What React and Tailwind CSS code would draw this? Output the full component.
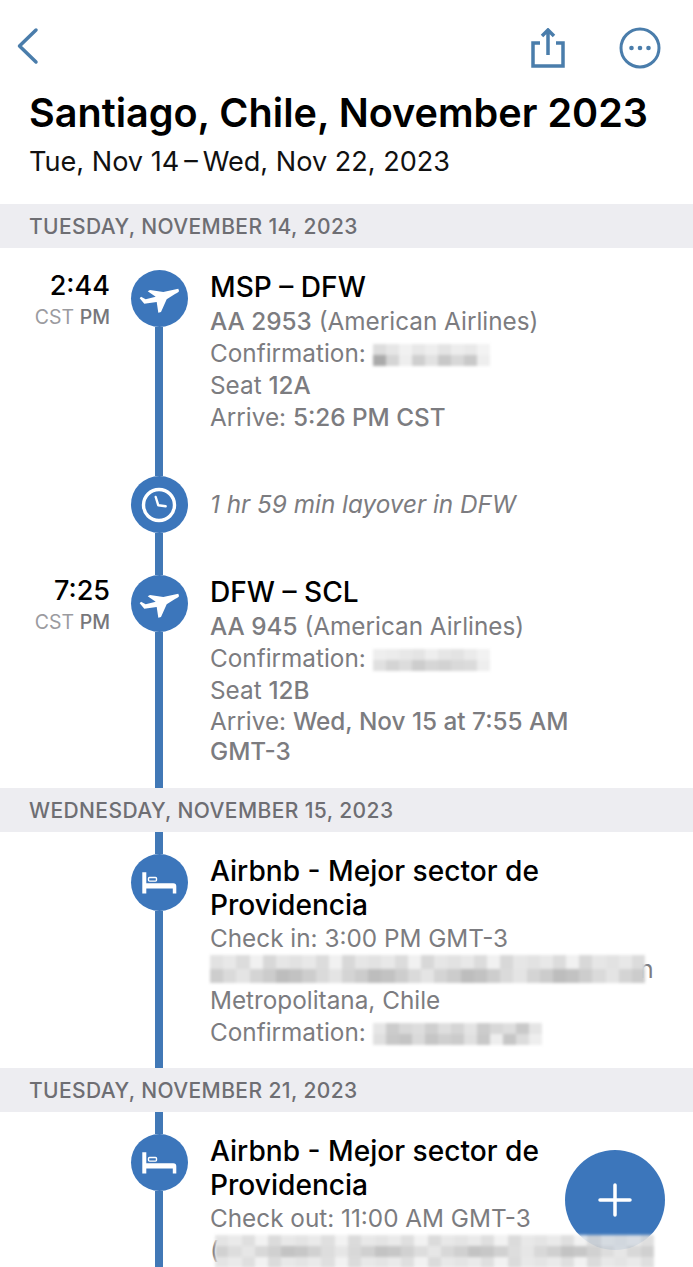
const Plane = () => (
    <svg viewBox="0 0 40 40" className="w-10 h-10 fill-white">
        <path d="M39.3 9.7 24.3 13 11 11l-2.3 1.3 8 5.4-10 2.6L2 17.7l-1.3 1.6 4.6 5.4L17.7 23l1.6 10.7 2.7-.7 5.7-12.7 8.3-5.3c2-1 4-2.2 4-3-.3-1.4-.7-2.2-.7-2.3z" />
    </svg>
);

const Bed = () => (
    <svg viewBox="0 0 40 40" className="w-10 h-10">
        <path fill="white" d="M3.3 9.3h4v11h27a3 3 0 0 1 3 3v7.3h-3.5v-5H7.3v5h-4z" />
        <rect x="9.5" y="14.5" width="8" height="3.6" rx="1" fill="none" stroke="white" strokeWidth="1.4" />
    </svg>
);

const ClockIcon = () => (
    <svg viewBox="0 0 40 40" className="w-10 h-10" fill="none" stroke="white" strokeLinecap="round" strokeLinejoin="round">
        <circle cx="20" cy="20" r="15.5" strokeWidth="3.4" />
        <path d="M16.7 12l2.6 8.3 7.4 1" strokeWidth="2.4" />
    </svg>
);

const Blur = ({ cells, cell = 13, cellHeight = 11, rows = 2, className = '' }) => (
    <div className={`inline-grid align-middle blur-[1.5px] ${className}`} style={{ gridTemplateColumns: `repeat(${Math.ceil(cells.length / rows)}, ${cell}px)` }}>
        {cells.map((c, i) => (
            <div key={i} style={{ backgroundColor: c, height: cellHeight }} />
        ))}
    </div>
);

const short1 = ['#ddd', '#e6e6e6', '#f1f1f1', '#e8e8e8', '#eee', '#e4e4e4', '#ededed', '#e9e9e9', '#f3f3f3',
    '#aaa', '#d5d5d5', '#eee', '#cfcfcf', '#e2e2e2', '#c8c8c8', '#d8d8d8', '#c9c9c9', '#eee'];
const short2 = ['#eee', '#ececec', '#e8e8e8', '#e4e4e4', '#eee', '#e6e6e6', '#e3e3e3', '#ebebeb', '#f2f2f2',
    '#e0e0e0', '#d4d4d4', '#dcdcdc', '#cdcdcd', '#d6d6d6', '#d2d2d2', '#d9d9d9', '#dbdbdb', '#eee'];
const conf = ['#e6e6e6', '#ccc', '#d8d8d8', '#ddd', '#cfcfcf', '#dedede', '#d5d5d5', '#e4e4e4', '#ccc', '#d8d8d8', '#dedede', '#c9c9c9', '#e5e5e5',
    '#e0e0e0', '#c8c8c8', '#c4c4c4', '#dadada', '#c6c6c6', '#cfcfcf', '#cbcbcb', '#e0e0e0', '#c8c8c8', '#eee', '#c6c6c6', '#dcdcdc', '#eee'];
const addrTop = [];
const addrBottom = [];
for (let i = 0; i < 33; i++) addrTop.push(['#e2e2e2', '#e8e8e8', '#dcdcdc', '#f1f1f1', '#d8d8d8', '#e6e6e6'][i * 7 % 6]);
for (let i = 0; i < 33; i++) addrBottom.push(['#cdcdcd', '#d4d4d4', '#c2c2c2', '#e4e4e4', '#bdbdbd', '#dadada', '#cccccc'][i * 5 % 7]);
const addr = [...addrTop, ...addrBottom];
const addrTall = [...addrTop, ...addrBottom, ...addrTop];

function DayHeader({ children }) {
    return (
        <div className="h-[44px] bg-[#ededf1] flex items-center pl-[29px] pt-[1px] text-[21px] font-medium text-[#6e6e73] tracking-[0.4px]">
            {children}
        </div>
    );
}

function Row({ time, icon, height, topGap = 22, first = false, children }) {
    return (
        <div className="flex" style={{ height }}>
            <div className="w-[110px] text-right" style={{ marginTop: topGap - 2 }}>
                {time && (
                    <>
                        <div className="text-[27px] leading-[36px] font-medium text-black">{time}</div>
                        <div className="mt-[1px] text-[19.5px] leading-[24px] text-[#9b9b9f]">
                            CST <span className="font-medium text-[#77777b]">PM</span>
                        </div>
                    </>
                )}
            </div>
            <div className="w-[100px] pr-[2px] flex flex-col items-center">
                {topGap > 0 && <div className={`w-[8px] shrink-0 ${first ? '' : 'bg-[#4178b6]'}`} style={{ height: topGap }} />}
                <div className="w-[57px] h-[57px] rounded-full bg-[#3c76bb] flex items-center justify-center shrink-0">
                    {icon}
                </div>
                <div className="w-[8px] flex-1 bg-[#4178b6]" />
            </div>
            <div className="flex-1 max-w-[420px] text-[24.3px] leading-[32px] text-[#7c7c80]" style={{ paddingTop: topGap }}>
                {children}
            </div>
        </div>
    );
}

const Title = ({ children }) => <div className="text-[28.1px] leading-[34px] font-medium text-black">{children}</div>;

export default function App() {
    return (
        <div className="relative h-[1267px] overflow-hidden bg-white" style={{ fontFamily: 'Inter, "Noto Sans", sans-serif' }}>
            <div className="h-[204px]">
                <div className="h-[91px] flex items-start justify-between pl-[16px] pr-[32px] pt-[27px]">
                    <svg width="24" height="38" viewBox="0 0 24 38" fill="none" stroke="#4a7dab" strokeWidth="3.5" strokeLinecap="round" strokeLinejoin="round">
                        <path d="M20 3 3.5 19 20 35" />
                    </svg>
                    <div className="flex items-center gap-[54px]">
                        <svg width="34" height="40" viewBox="0 0 34 40" fill="none" stroke="#4a7dab" strokeWidth="3.5">
                            <path d="M9 15H2v23h30V15h-7M17 27V3M11 8l6-6 6 6" />
                        </svg>
                        <svg width="42" height="42" viewBox="0 0 42 42" fill="none" stroke="#4a7dab" strokeWidth="3">
                            <circle cx="21" cy="21" r="19" />
                            <circle cx="12.5" cy="21" r="2.3" fill="#4a7dab" stroke="none" />
                            <circle cx="21" cy="21" r="2.3" fill="#4a7dab" stroke="none" />
                            <circle cx="29.5" cy="21" r="2.3" fill="#4a7dab" stroke="none" />
                        </svg>
                    </div>
                </div>
                <h1 className="pl-[29px] text-[39.6px] leading-[44px] font-semibold text-black whitespace-nowrap">Santiago, Chile, November 2023</h1>
                <p className="pl-[29px] mt-[9px] text-[27.1px] leading-[36px] text-[#111]">Tue, Nov 14{'\u2009'}–{'\u2009'}Wed, Nov 22, 2023</p>
            </div>

            <DayHeader>TUESDAY, NOVEMBER 14, 2023</DayHeader>
            <Row time="2:44" height={228} first icon={<Plane />}>
                <Title>MSP – DFW</Title>
                <div className="pt-[1px]"><span className="font-medium">AA 2953</span> (American Airlines)</div>
                <div>Confirmation: <Blur cells={short1} /></div>
                <div>Seat <span className="font-medium">12A</span></div>
                <div>Arrive: <span className="font-medium">5:26 PM CST</span></div>
            </Row>
            <Row height={99} topGap={0} icon={<ClockIcon />}>
                <div className="pt-[12px] italic">1 hr 59 min layover in DFW</div>
            </Row>
            <Row time="7:25" height={213} topGap={0} icon={<Plane />}>
                <Title>DFW – SCL</Title>
                <div className="pt-[1px]"><span className="font-medium">AA 945</span> (American Airlines)</div>
                <div>Confirmation: <Blur cells={short2} /></div>
                <div>Seat <span className="font-medium">12B</span></div>
                <div className="leading-[31px]">Arrive: <span className="font-medium">Wed, Nov 15 at 7:55 AM</span></div>
                <div className="leading-[29px] font-medium">GMT-3</div>
            </Row>

            <DayHeader>WEDNESDAY, NOVEMBER 15, 2023</DayHeader>
            <Row height={236} icon={<Bed />}>
                <Title>Airbnb - Mejor sector de Providencia</Title>
                <div>Check in: 3:00 PM GMT-3</div>
                <div className="h-[30px] flex items-center whitespace-nowrap">
                    <Blur cells={addr} cell={13.2} cellHeight={14} className="relative z-10" />
                    <span className="-ml-[6px]">n</span>
                </div>
                <div>Metropolitana, Chile</div>
                <div>Confirmation: <Blur cells={conf} /></div>
            </Row>

            <DayHeader>TUESDAY, NOVEMBER 21, 2023</DayHeader>
            <Row height={160} icon={<Bed />}>
                <Title>Airbnb - Mejor sector de Providencia</Title>
                <div>Check out: 11:00 AM GMT-3</div>
                <div className="h-[32px]">(</div>
            </Row>

            <div className="absolute left-[565px] top-[1150px] w-[100px] h-[100px] rounded-full bg-[#3c76bb] flex items-center justify-center">
                <svg width="34" height="34" viewBox="0 0 34 34" stroke="white" strokeWidth="3.5" strokeLinecap="round">
                    <path d="M17 2v30M2 17h30" />
                </svg>
            </div>
            <div className="absolute left-[215px] top-[1235px]">
                <Blur cells={addrTall} rows={3} cell={13.3} cellHeight={11} className="opacity-90" />
            </div>
        </div>
    );
}
